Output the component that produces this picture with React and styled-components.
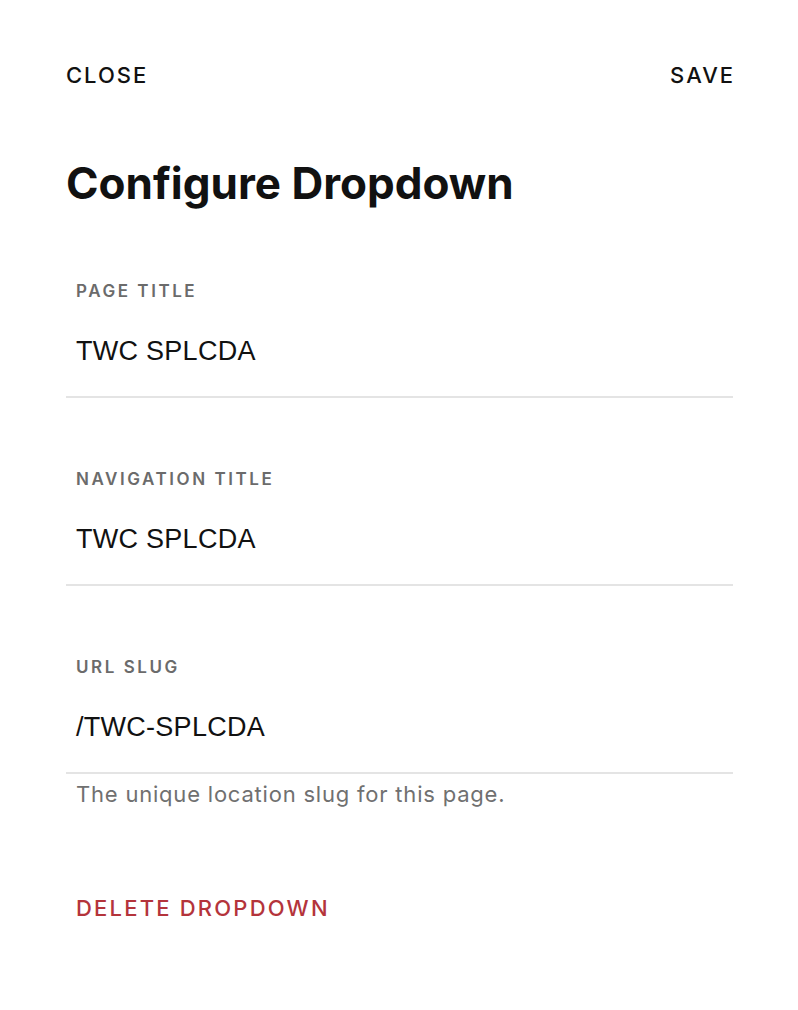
import React from "react";
import styled, { createGlobalStyle } from "styled-components";

const GlobalStyle = createGlobalStyle`
  body {
    margin: 0;
    background: #ffffff;
    font-family: Inter, "Liberation Sans", sans-serif;
    color: #111111;
  }
`;

const StyledPage = styled.div`
  padding: 63px 65px 60px 66px;
`;

const StyledTopBar = styled.div`
  display: flex;
  justify-content: space-between;
  align-items: center;
  height: 24px;
`;

const StyledAction = styled.button`
  border: none;
  background: none;
  padding: 0;
  font-family: Inter, "Liberation Sans", sans-serif;
  font-size: 22px;
  line-height: 24px;
  font-weight: 500;
  letter-spacing: 0.09em;
  color: #111111;
  cursor: pointer;
  &:last-child {
    margin-right: -0.09em;
  }
`;

const StyledHeading = styled.h1`
  margin: 71px 0 0;
  font-size: 44px;
  line-height: 50px;
  font-weight: 700;
  letter-spacing: 0;
  color: #111111;
`;

const StyledFields = styled.div`
  display: flex;
  flex-direction: column;
  gap: 71px;
  margin-top: 73px;
`;

const StyledField = styled.div`
  display: flex;
  flex-direction: column;
`;

const StyledLabel = styled.label`
  padding: 0 10px;
  font-size: 17px;
  line-height: 20px;
  font-weight: 600;
  letter-spacing: 0.15em;
  color: #6b6b6b;
`;

const StyledValue = styled.div`
  margin-top: 34px;
  padding: 0 10px 29px;
  border-bottom: 2px solid #e4e4e4;
  font-family: "Liberation Sans", Inter, sans-serif;
  font-size: 27px;
  line-height: 32px;
  letter-spacing: 0.01em;
  color: #111111;
`;

const StyledHelp = styled.p`
  margin: 8px 0 0;
  padding: 0 10px;
  font-size: 22px;
  line-height: 24px;
  letter-spacing: 0.036em;
  color: #707070;
`;

const StyledDelete = styled.button`
  align-self: flex-start;
  margin-top: 90px;
  padding: 0 10px;
  border: none;
  background: none;
  font-family: Inter, "Liberation Sans", sans-serif;
  font-size: 22px;
  line-height: 24px;
  font-weight: 500;
  letter-spacing: 0.1em;
  color: #b4343b;
  cursor: pointer;
`;

const fields = [
  { label: "PAGE TITLE", value: "TWC SPLCDA" },
  { label: "NAVIGATION TITLE", value: "TWC SPLCDA" },
  {
    label: "URL SLUG",
    value: "/TWC-SPLCDA",
    help: "The unique location slug for this page.",
  },
];

const App = () => {
  return (
    <StyledPage>
      <GlobalStyle />
      <StyledTopBar>
        <StyledAction>CLOSE</StyledAction>
        <StyledAction>SAVE</StyledAction>
      </StyledTopBar>
      <StyledHeading>Configure Dropdown</StyledHeading>
      <StyledFields>
        {fields.map((f) => (
          <StyledField key={f.label}>
            <StyledLabel>{f.label}</StyledLabel>
            <StyledValue>{f.value}</StyledValue>
            {f.help && <StyledHelp>{f.help}</StyledHelp>}
          </StyledField>
        ))}
      </StyledFields>
      <StyledDelete>DELETE DROPDOWN</StyledDelete>
    </StyledPage>
  );
};

export default App;
